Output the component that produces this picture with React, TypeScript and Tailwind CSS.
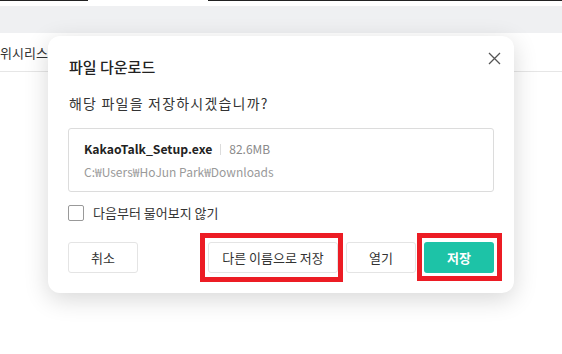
import React from 'react';

function CloseIcon() {
  return (
    <svg width="13" height="13" viewBox="0 0 13 13" fill="none">
      <path d="M1 1L12 12M12 1L1 12" stroke="#555" strokeWidth="1.3" />
    </svg>
  );
}

export default function App() {
  return (
    <div className="relative w-[562px] h-[354px] bg-white overflow-hidden font-['Noto_Sans_CJK_KR','Noto_Sans',sans-serif]">
      {/* page behind the modal */}
      <div className="flex h-px">
        <div className="w-[88px] bg-[#222]" />
        <div className="w-[120px]" />
        <div className="flex-1 bg-[#222]" />
      </div>
      <div className="h-[5px]" />
      <div className="h-[27px] bg-[#eff0f2]" />
      <div className="h-[39px] border-b border-[#e6e6e6] flex items-center">
        <span className="text-[13px] leading-4 text-[#333] pt-[2px]">위시리스트</span>
      </div>

      {/* download dialog */}
      <div className="absolute left-[48px] top-[36px] w-[466px] h-[257px] bg-white rounded-[12px] shadow-[0_6px_24px_rgba(0,0,0,0.16)] px-[20px] pt-[21px]">
        <button className="absolute left-[440px] top-[16px]"><CloseIcon /></button>
        <h2 className="text-[15px] leading-5 text-[#222] font-medium pl-px">파일 다운로드</h2>
        <p className="mt-[16px] text-[14px] leading-5 text-[#333] pl-px tracking-[1.2px]">해당 파일을 저장하시겠습니까?</p>

        <div className="mt-[15px] h-[64px] border border-[#dcdcdc] rounded-[3px] px-[15px] pt-[11px] flex flex-col gap-[5px]">
          <div className="flex items-center leading-[18px]">
            <span className="text-[12.2px] font-bold text-[#222]">KakaoTalk_Setup.exe</span>
            <span className="mx-[8px] h-[11px] w-px bg-[#dcdcdc]" />
            <span className="text-[12px] text-[#8a8a8a]">82.6MB</span>
          </div>
          <div className="text-[12px] leading-[18px] text-[#9a9a9a]">C:₩Users₩HoJun Park₩Downloads</div>
        </div>

        <label className="mt-[13px] flex items-center gap-[9px] h-4">
          <span className="w-[16px] h-[16px] border border-[#999] rounded-[2px] bg-white" />
          <span className="text-[13px] leading-4 text-[#333]">다음부터 물어보지 않기</span>
        </label>

        <div className="mt-[21px] flex justify-between">
          <button className="w-[70px] h-[31px] border border-[#e4e4e4] rounded-[3px] text-[13px] text-[#333] bg-white">취소</button>
          <div className="flex gap-[8px]">
            <button className="w-[130px] h-[31px] border border-[#e4e4e4] rounded-[3px] text-[13px] text-[#333] bg-white">다른 이름으로 저장</button>
            <button className="w-[70px] h-[31px] border border-[#e4e4e4] rounded-[3px] text-[13px] text-[#333] bg-white">열기</button>
            <button className="w-[70px] h-[31px] rounded-[3px] text-[13px] font-bold text-white bg-[#1dc3a7]">저장</button>
          </div>
        </div>
      </div>

      {/* red annotation boxes */}
      <div className="absolute left-[200px] top-[233px] w-[143px] h-[49px] border-[5px] border-[#ec1c24]" />
      <div className="absolute left-[417px] top-[233px] w-[85px] h-[48px] border-[5px] border-[#ec1c24]" />
    </div>
  );
}
